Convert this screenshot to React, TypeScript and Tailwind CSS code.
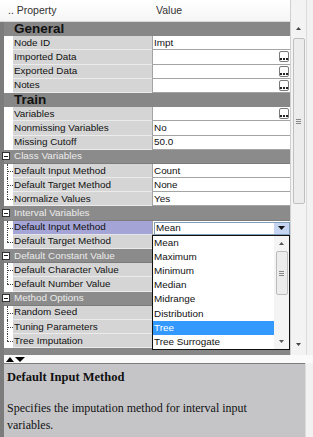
import React from "react";

type Row = {
  kind: "section" | "group" | "row" | "child";
  label: string;
  value?: string;
  btn?: boolean;
  line?: "mid" | "end";
  selected?: boolean;
  combo?: string;
};

const rows: Row[] = [
  { kind: "section", label: "General" },
  { kind: "row", label: "Node ID", value: "Impt" },
  { kind: "row", label: "Imported Data", btn: true },
  { kind: "row", label: "Exported Data", btn: true },
  { kind: "row", label: "Notes", btn: true },
  { kind: "section", label: "Train" },
  { kind: "row", label: "Variables", btn: true },
  { kind: "row", label: "Nonmissing Variables", value: "No" },
  { kind: "row", label: "Missing Cutoff", value: "50.0" },
  { kind: "group", label: "Class Variables" },
  { kind: "child", label: "Default Input Method", value: "Count", line: "mid" },
  { kind: "child", label: "Default Target Method", value: "None", line: "mid" },
  { kind: "child", label: "Normalize Values", value: "Yes", line: "end" },
  { kind: "group", label: "Interval Variables" },
  { kind: "child", label: "Default Input Method", line: "mid", selected: true, combo: "Mean" },
  { kind: "child", label: "Default Target Method", line: "end" },
  { kind: "group", label: "Default Constant Value" },
  { kind: "child", label: "Default Character Value", line: "mid" },
  { kind: "child", label: "Default Number Value", line: "end" },
  { kind: "group", label: "Method Options" },
  { kind: "child", label: "Random Seed", line: "mid" },
  { kind: "child", label: "Tuning Parameters", line: "mid" },
  { kind: "child", label: "Tree Imputation", line: "end" },
];

const options = ["Mean", "Maximum", "Minimum", "Median", "Midrange", "Distribution", "Tree", "Tree Surrogate"];

function Ellipsis() {
  return (
    <div className="mr-[1px] flex h-[11px] w-[10px] items-end justify-center gap-[1px] rounded-[2px] border border-[#7a7a7a] bg-white pb-[1px]">
      <span className="h-[2px] w-[2px] bg-[#222]" />
      <span className="h-[2px] w-[2px] bg-[#222]" />
      <span className="h-[2px] w-[2px] bg-[#222]" />
    </div>
  );
}

function MinusBox() {
  return (
    <div className="ml-[-2px] flex h-[8px] w-[8px] items-center justify-center border border-[#333] bg-white">
      <span className="h-[1px] w-[4px] bg-[#222]" />
    </div>
  );
}

function TreeLine({ line }: { line: "mid" | "end" }) {
  return (
    <div className="relative h-full w-[9px] bg-white">
      <div
        className={
          line === "mid"
            ? "absolute left-[3px] top-0 h-full border-l border-dotted border-[#444]"
            : "absolute left-[3px] top-0 h-1/2 border-l border-dotted border-[#444]"
        }
      />
      <div className="absolute left-[3px] top-1/2 w-[6px] border-t border-dotted border-[#444]" />
    </div>
  );
}

function GridRow({ row }: { row: Row }) {
  if (row.kind === "section") {
    return (
      <div className="flex h-[14.2px] items-center bg-[#878787] pl-[10px] text-[13.5px] font-bold leading-none text-[#111]">
        {row.label}
      </div>
    );
  }
  if (row.kind === "group") {
    return (
      <div className="flex h-[14.2px] items-center border-b border-[#7c7c7c] bg-[#8b8b8b]">
        <div className="flex w-[9px] items-center">
          <MinusBox />
        </div>
        <span className="pl-[1px] text-[#ececec]">{row.label}</span>
      </div>
    );
  }
  return (
    <div className="flex h-[14.2px]">
      {row.kind === "child" && row.line ? (
        <TreeLine line={row.line} />
      ) : (
        <div className="h-full w-[9px] bg-white" />
      )}
      <div
        className={
          row.selected
            ? "flex w-[139px] items-center border-b border-[#e4e4ea] bg-[#a4a4d6] pl-[1px] text-[#111]"
            : "flex w-[139px] items-center border-b border-[#ebebeb] bg-[#d5d5d5] pl-[1px] text-[#111]"
        }
      >
        {row.label}
      </div>
      <div className="flex w-[138px] items-center justify-between border-b border-l border-[#a4a4a4] bg-white pl-[1px] text-[#111]">
        {row.combo ? (
          <div className="mt-[2px] flex h-[13px] w-full items-center justify-between border border-[#7f9db9] bg-white">
            <span className="pl-[1px]">{row.combo}</span>
            <div className="flex h-full w-[15px] items-center justify-center bg-[#c6d6f2]">
              <svg width="7" height="4" viewBox="0 0 7 4">
                <path d="M0 0h7L3.5 4z" fill="#111" />
              </svg>
            </div>
          </div>
        ) : (
          <>
            <span>{row.value ?? ""}</span>
            {row.btn && <Ellipsis />}
          </>
        )}
      </div>
    </div>
  );
}

function DropList() {
  return (
    <div className="absolute left-[148px] top-[213px] flex h-[115px] w-[138px] border border-[#111] bg-white">
      <div className="flex w-[121px] flex-col">
        {options.map((o) => (
          <div
            key={o}
            className={
              o === "Tree"
                ? "flex h-[14.1px] items-center bg-[#3399ff] pl-[1px] text-white"
                : "flex h-[14.1px] items-center pl-[1px] text-[#111]"
            }
          >
            {o}
          </div>
        ))}
      </div>
      <div className="flex w-[15px] flex-col items-center bg-[#f4f4f4]">
        <svg className="mt-[6px]" width="5" height="3" viewBox="0 0 5 3">
          <path d="M0 3h5L2.5 0z" fill="#555" />
        </svg>
        <div className="mt-[6px] flex h-[44px] w-[12px] flex-col items-center justify-center gap-[1px] rounded-[2px] border border-[#bcbcbc] bg-[#ececec]">
          <span className="h-[1px] w-[5px] bg-[#888]" />
          <span className="h-[1px] w-[5px] bg-[#888]" />
          <span className="h-[1px] w-[5px] bg-[#888]" />
        </div>
        <div className="flex-1" />
        <svg className="mb-[6px]" width="5" height="3" viewBox="0 0 5 3">
          <path d="M0 0h5L2.5 3z" fill="#555" />
        </svg>
      </div>
    </div>
  );
}

export default function App() {
  return (
    <div
      className="flex h-[437px] w-[313px] flex-col overflow-hidden bg-[#efefef] text-[9.9px] leading-none"
      style={{ fontFamily: '"Liberation Sans", Arial, sans-serif' }}
    >
      <div className="flex h-[355px]">
        <div className="flex w-[290px] flex-col">
          <div className="flex h-[22px] items-center border-b border-[#d8d8d8] bg-gradient-to-b from-white to-[#f6f6f6] text-[10.5px] text-[#333]">
            <span className="w-[152px] pl-[8px]">.. Property</span>
            <span className="pl-[4px]">Value</span>
          </div>
          <div className="relative flex flex-1 flex-col border-l-4 border-[#7c7c7c] bg-[#878787]">
            {rows.map((r, i) => (
              <GridRow key={i} row={r} />
            ))}
            <DropList />
          </div>
        </div>
        <div className="flex w-[16px] flex-col items-center border-l border-[#d0d0d0] bg-[#f3f3f3]">
          <svg className="mt-[27px]" width="5" height="3" viewBox="0 0 5 3">
            <path d="M0 3h5L2.5 0z" fill="#444" />
          </svg>
          <div className="mt-[8px] flex h-[166px] w-[12px] flex-col items-center justify-center gap-[1px] rounded-[2px] border border-[#c0c0c0] bg-[#ececec]">
            <span className="h-[1px] w-[5px] bg-[#888]" />
            <span className="h-[1px] w-[5px] bg-[#888]" />
            <span className="h-[1px] w-[5px] bg-[#888]" />
          </div>
          <div className="flex-1" />
          <svg className="mb-[9px]" width="5" height="3" viewBox="0 0 5 3">
            <path d="M0 0h5L2.5 3z" fill="#444" />
          </svg>
        </div>
        <div className="w-[7px] border-l border-[#dcdcdc] bg-[#f2f2f2]" />
      </div>
      <div className="flex h-[8px] items-end gap-[1px] border-l-4 border-[#7c7c7c] bg-[#fafafa] pl-[2px] pb-[1px]">
        <svg width="8" height="5" viewBox="0 0 8 5">
          <path d="M0 5h8L4 0z" fill="#000" />
        </svg>
        <svg width="10" height="5" viewBox="0 0 10 5">
          <path d="M0 0h10L5 5z" fill="#000" />
        </svg>
      </div>
      <div className="flex flex-1">
        <div
          className="flex-1 border-l-4 border-t border-[#7c7c7c] bg-[#c5c5c8] pl-[3px] pr-[30px] pt-[7px] text-[#111]"
          style={{ fontFamily: '"Liberation Serif", "Times New Roman", serif' }}
        >
          <div className="text-[12.5px] font-bold leading-none">Default Input Method</div>
          <div className="mt-[16px] text-[12px] leading-[17px]">
            Specifies the imputation method for interval input variables.
          </div>
        </div>
        <div className="w-[8px] border-l border-[#dcdcdc] bg-[#f2f2f2]" />
      </div>
    </div>
  );
}
